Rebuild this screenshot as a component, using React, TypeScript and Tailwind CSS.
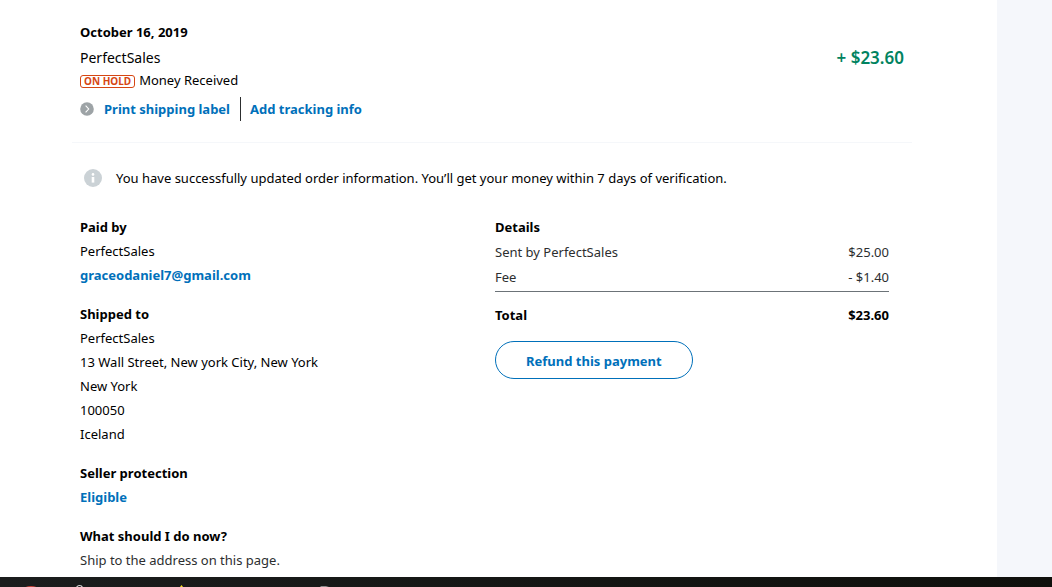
import type { ReactNode } from "react";

const linkClass = "font-bold text-[#0070ba] hover:underline";

function Section({ title, children }: { title: string; children: ReactNode }) {
  return (
    <section>
      <h2 className="font-bold">{title}</h2>
      {children}
    </section>
  );
}

function TransactionHeader() {
  return (
    <header className="flex items-start justify-between border-b border-[#f5f7fa] px-2 pb-[21px]">
      <div>
        <h1 className="font-bold">October 16, 2019</h1>
        <p className="text-[14px] leading-7">PerfectSales</p>
        <p className="flex h-4 items-center gap-1 leading-4">
          <span className="mt-0.5 h-[13px] rounded-[3px] border border-[#d64613] px-[3px] text-[10px] leading-[11px] font-bold text-[#d64613]">
            ON HOLD
          </span>
          Money Received
        </p>
        <div className="mt-[9px] flex h-6 items-center">
          <svg className="mr-2.5 size-3.5" viewBox="0 0 14 14" aria-hidden="true">
            <circle cx="7" cy="7" r="6.8" fill="#9da3a6" />
            <path d="M5.6 3.6 8.7 7l-3.1 3.4" fill="none" stroke="#fff" strokeWidth="1.1" />
          </svg>
          <a href="#print" className={linkClass}>Print shipping label</a>
          <span className="mr-[9px] ml-2.5 h-6 w-px bg-[#2c2e2f]" />
          <a href="#tracking" className={linkClass}>Add tracking info</a>
        </div>
      </div>
      <p className="mt-6 text-[17px] leading-7 font-semibold text-[#018360]">+ $23.60</p>
    </header>
  );
}

function PaymentDetails() {
  return (
    <div className="pr-[21px]">
      <h2 className="font-bold">Details</h2>
      <table className="mt-px w-full">
        <tbody className="leading-[25px] text-[#2c2e2f]">
          <tr>
            <th scope="row" className="text-left font-normal">Sent by PerfectSales</th>
            <td className="text-right">$25.00</td>
          </tr>
          <tr className="border-b border-[#6c7378]">
            <th scope="row" className="pb-px text-left font-normal">Fee</th>
            <td className="pb-px text-right">- $1.40</td>
          </tr>
        </tbody>
        <tfoot className="font-bold">
          <tr>
            <th scope="row" className="pt-[11px] text-left">Total</th>
            <td className="pt-[11px] text-right">$23.60</td>
          </tr>
        </tfoot>
      </table>
      <button
        type="button"
        className="mt-3.5 h-[38px] rounded-full border border-[#0070ba] px-[30px] pt-0.5 font-bold text-[#0070ba]"
      >
        Refund this payment
      </button>
    </div>
  );
}

function Taskbar() {
  return (
    <footer className="h-2.5 bg-linear-to-r from-[#1b1d1d] to-[#0f100c]">
      <svg className="h-2.5 w-[350px]" viewBox="0 0 350 10" aria-hidden="true">
        <ellipse cx="31" cy="13" rx="8" ry="4" fill="#c9453c" />
        <circle cx="79.500" cy="11.500" r="3" fill="none" stroke="#d8d8d8" strokeWidth="1.200" />
        <path d="M181.500 8l1.500 2h-3z" fill="#f2dc1e" />
        <path d="M320 9h6l3 1h-8z" fill="#8a8a8a" />
      </svg>
    </footer>
  );
}

export default function App() {
  return (
    <div className="flex min-h-screen flex-col bg-white font-['Noto_Sans',sans-serif] text-[13px] leading-6 text-black">
      <div className="flex flex-1">
        <main className="flex-1 pt-5 pr-[85px] pb-[3px] pl-[72px]">
          <TransactionHeader />
          <div role="status" className="mt-[23px] flex items-center pl-3">
            <svg className="mr-3.5 size-[18px]" viewBox="0 0 18 18" aria-hidden="true">
              <circle cx="9" cy="9" r="9" fill="#cbd2d6" />
              <circle cx="9" cy="5.400" r="1.300" fill="#fff" />
              <path d="M7.700 8h2.600v5.600H7.700z" fill="#fff" />
            </svg>
            <p>
              You have successfully updated order information. You’ll get your money within 7 days of
              verification.
            </p>
          </div>
          <div className="mt-[25px] grid grid-cols-2 pr-0.5 pl-2">
            <div className="flex flex-col gap-[15px]">
              <Section title="Paid by">
                <p>PerfectSales</p>
                <a href="mailto:graceodaniel7@gmail.com" className={linkClass}>
                  graceodaniel7@gmail.com
                </a>
              </Section>
              <Section title="Shipped to">
                <address className="not-italic">
                  <p>PerfectSales</p>
                  <p>13 Wall Street, New york City, New York</p>
                  <p>New York</p>
                  <p>100050</p>
                  <p>Iceland</p>
                </address>
              </Section>
              <Section title="Seller protection">
                <a href="#eligible" className={linkClass}>Eligible</a>
              </Section>
              <Section title="What should I do now?">
                <p className="text-[#2c2e2f]">Ship to the address on this page.</p>
              </Section>
            </div>
            <PaymentDetails />
          </div>
        </main>
        <aside className="w-[55px] bg-[#f5f7fb]" />
      </div>
      <Taskbar />
    </div>
  );
}
